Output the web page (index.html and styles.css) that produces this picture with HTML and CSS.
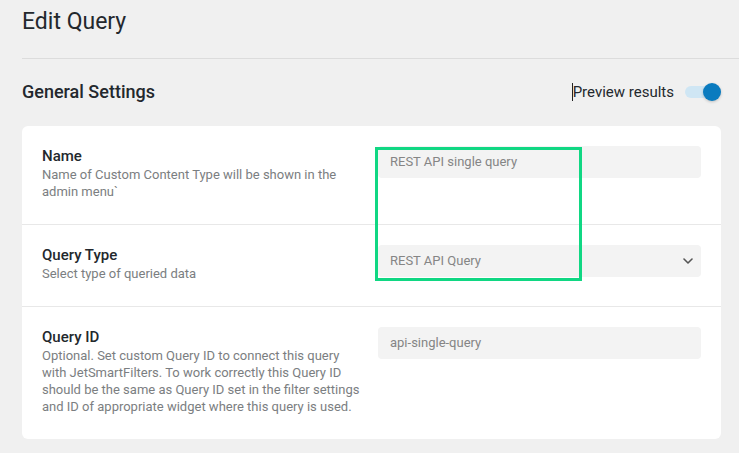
FILE: index.html
```html
<!DOCTYPE html>
<html lang="en">
<head>
<meta charset="utf-8">
<title>Edit Query</title>
<link rel="stylesheet" href="styles.css">
</head>
<body>
<div class="page">
  <h1 class="title">Edit Query</h1>
  <hr class="title-rule">
  <div class="section-head">
    <h2 class="section-title">General Settings</h2>
    <div class="preview">
      <span class="preview-label"><span class="caret"></span>Preview results</span>
      <span class="toggle" role="switch" aria-checked="true">
        <span class="toggle-track"></span>
        <span class="toggle-knob"></span>
      </span>
    </div>
  </div>
  <div class="card">
    <div class="row">
      <div class="info">
        <div class="label">Name</div>
        <div class="desc">Name of Custom Content Type will be shown in the admin menu`</div>
      </div>
      <div class="field">REST API single query</div>
    </div>
    <div class="row">
      <div class="info">
        <div class="label">Query Type</div>
        <div class="desc">Select type of queried data</div>
      </div>
      <div class="field select">
        <span>REST API Query</span>
        <svg class="chevron" width="10" height="6" viewBox="0 0 10 6"><path d="M1 1l4 4 4-4" fill="none" stroke="#555" stroke-width="1.6" stroke-linecap="round" stroke-linejoin="round"/></svg>
      </div>
    </div>
    <div class="row">
      <div class="info">
        <div class="label">Query ID</div>
        <div class="desc">Optional. Set custom Query ID to connect this query with JetSmartFilters. To work correctly this Query ID should be the same as Query ID set in the filter settings and ID of appropriate widget where this query is used.</div>
      </div>
      <div class="field">api-single-query</div>
    </div>
  </div>
</div>
<div class="highlight"></div>
</body>
</html>
```
FILE: styles.css
```css
* { box-sizing: border-box; }
html, body { margin: 0; padding: 0; }
body {
  background: #f0f0f0;
  font-family: Roboto, "Liberation Sans", Arial, sans-serif;
  color: #23282d;
  width: 739px;
  height: 453px;
  overflow: hidden;
  position: relative;
}
.page {
  padding: 8px 0 0 22px;
}
.title {
  margin: 0;
  font-size: 23px;
  line-height: 28px;
  font-weight: 400;
  color: #23282d;
}
.title-rule {
  margin: 22px 0 0 0;
  border: 0;
  height: 1px;
  background: #dcdcdc;
}
.section-head {
  margin: 21px 18px 22px 0;
  height: 24px;
  display: flex;
  align-items: center;
  justify-content: space-between;
}
.section-title {
  margin: 0;
  font-size: 18px;
  line-height: 24px;
  font-weight: 500;
  color: #23282d;
}
.preview {
  display: flex;
  align-items: center;
  gap: 11px;
}
.preview-label {
  display: flex;
  align-items: center;
  font-size: 15px;
  line-height: 24px;
  color: #23282d;
}
.caret {
  display: inline-block;
  width: 1px;
  height: 18px;
  background: #222;
}
.toggle {
  position: relative;
  display: inline-block;
  width: 36px;
  height: 18px;
}
.toggle-track {
  position: absolute;
  left: 0;
  top: 3px;
  width: 32px;
  height: 12px;
  border-radius: 6px;
  background: #cfe6f4;
}
.toggle-knob {
  position: absolute;
  right: 0;
  top: 0;
  width: 18px;
  height: 18px;
  border-radius: 50%;
  background: #0a7bbf;
  box-shadow: 0 1px 3px rgba(0, 0, 0, 0.2);
}
.card {
  margin-right: 18px;
  background: #fff;
  border-radius: 6px;
}
.row {
  display: grid;
  grid-template-columns: 320px 1fr;
  column-gap: 16px;
  align-items: start;
  padding: 20px 20px 24px 20px;
  border-bottom: 1px solid #e8e8e8;
}
.row:last-child { border-bottom: 0; }
.label {
  font-size: 15px;
  line-height: 20px;
  font-weight: 500;
  color: #23282d;
}
.desc {
  font-size: 13px;
  line-height: 17px;
  color: #7b7e81;
}
.field {
  height: 32px;
  border-radius: 4px;
  background: #f3f3f3;
  padding: 0 12px;
  font-size: 13px;
  line-height: 32px;
  color: #858585;
  white-space: nowrap;
}
.select {
  display: flex;
  align-items: center;
  justify-content: space-between;
  padding-right: 8px;
}
.chevron { display: block; }
.highlight {
  position: absolute;
  left: 375px;
  top: 147px;
  width: 207px;
  height: 134px;
  border: 3px solid #10d783;
  pointer-events: none;
}
```
